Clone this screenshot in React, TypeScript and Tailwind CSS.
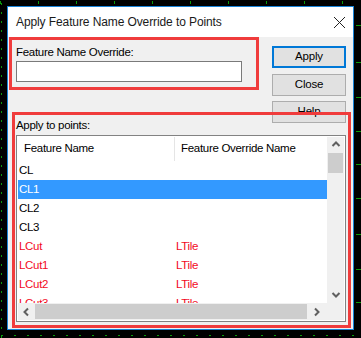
import React from "react";

const font = { fontFamily: '"Segoe UI", "Liberation Sans", Arial, sans-serif' };

function Background() {
  const topTicks = [];
  for (let x = 0; x < 361; x += 38) topTicks.push(x);
  const rightTicks = [25, 62, 97, 131, 164, 198, 234, 269, 302];
  const leftDots = [];
  for (let y = 3; y < 338; y += 9) leftDots.push(y);
  const bottomDots = [];
  for (let x = 1; x < 361; x += 13) bottomDots.push(x);
  return (
    <svg className="absolute inset-0" width={361} height={338}>
      {topTicks.map((x) => (
        <rect key={"t" + x} x={x} y={1} width={1} height={3} fill="#0a9a0a" />
      ))}
      {leftDots.map((y) => (
        <rect key={"l" + y} x={1} y={y} width={1} height={2} fill="#0a9a0a" />
      ))}
      {bottomDots.map((x) => (
        <rect key={"b" + x} x={x} y={335} width={2} height={1} fill="#0a9a0a" />
      ))}
      {rightTicks.map((y) => (
        <rect key={"r" + y} x={356} y={y} width={5} height={1} fill="#0a9a0a" />
      ))}
    </svg>
  );
}

function Chevron({ dir }: { dir: "up" | "down" | "left" | "right" }) {
  const paths: Record<string, string> = {
    up: "M1.5 6 L5 2.5 L8.5 6",
    down: "M1.5 3 L5 6.5 L8.5 3",
    left: "M6 1.5 L2.5 5 L6 8.5",
    right: "M3 1.5 L6.5 5 L3 8.5",
  };
  return (
    <svg width={10} height={10} viewBox="0 0 10 10">
      <path d={paths[dir]} fill="none" stroke="#606060" strokeWidth={2} />
    </svg>
  );
}

const rows: { a: string; b: string; red?: boolean; sel?: boolean }[] = [
  { a: "CL", b: "" },
  { a: "CL1", b: "", sel: true },
  { a: "CL2", b: "" },
  { a: "CL3", b: "" },
  { a: "LCut", b: "LTile", red: true },
  { a: "LCut1", b: "LTile", red: true },
  { a: "LCut2", b: "LTile", red: true },
  { a: "LCut3", b: "LTile", red: true },
];

function Button({ label, primary }: { label: string; primary?: boolean }) {
  return (
    <div
      className={
        "w-[74px] h-[22px] flex items-center justify-center bg-[#e1e1e1] text-[11.5px] tracking-[-0.2px] text-black " +
        (primary ? "border-2 border-[#0078d7]" : "border border-[#adadad]")
      }
    >
      {label}
    </div>
  );
}

export default function App() {
  return (
    <div className="relative w-[361px] h-[338px] bg-black overflow-hidden" style={font}>
      <Background />
      <div className="relative pt-[6px] pl-[7px]">
        <div className="relative w-[347px] h-[324px] border border-[#1883d7] bg-[#f0f0f0] flex flex-col">
          {/* Title bar */}
          <div className="h-[30px] bg-white flex items-center justify-between pl-[8px] pr-[7px]">
            <span className="text-[12px] tracking-[-0.1px] text-[#1a1a1a] leading-none">
              Apply Feature Name Override to Points
            </span>
            <svg width={13} height={13} viewBox="0 0 13 13">
              <path d="M1 1 L12 12 M12 1 L1 12" stroke="#222" strokeWidth={1} />
            </svg>
          </div>
          {/* Body */}
          <div className="flex-1 flex flex-col pl-[8px] pr-[6px] text-[11.5px] tracking-[-0.3px]">
            <div className="flex justify-between pr-[1px]">
              <div className="flex flex-col pt-[8px]">
                <div className="leading-[15px] text-black">Feature Name Override:</div>
                <div className="mt-[1px] w-[226px] h-[21px] bg-white border border-[#7a7a7a]" />
                <div className="mt-[36px] leading-[15px] text-black">Apply to points:</div>
              </div>
              <div className="flex flex-col pt-[9px]">
                <Button label="Apply" primary />
                <div className="mt-[6px]">
                  <Button label="Close" />
                </div>
                <div className="mt-[5px]">
                  <Button label="Help" />
                </div>
              </div>
            </div>
            {/* List box */}
            <div className="mt-[2px] w-[330px] h-[187px] border border-[#828282] bg-white p-[1px] flex flex-col">
              <div className="flex flex-1 min-h-0">
                <div className="w-[309px] flex flex-col overflow-hidden">
                  <div className="h-[24px] shrink-0 flex items-center text-black">
                    <div className="w-[156px] pl-[6px]">Feature Name</div>
                    <div className="w-[1px] h-[24px] bg-[#e5e5e5]" />
                    <div className="pl-[6px]">Feature Override Name</div>
                  </div>
                  <div className="flex flex-col overflow-hidden">
                    {rows.map((r) => (
                      <div
                        key={r.a}
                        className={
                          "h-[19px] shrink-0 flex items-center " +
                          (r.sel ? "bg-[#3399ff] text-white " : "") +
                          (r.red ? "text-[#f20a1e]" : r.sel ? "" : "text-black")
                        }
                      >
                        <div className="w-[158px] pl-[1px]">{r.a}</div>
                        <div>{r.b}</div>
                      </div>
                    ))}
                  </div>
                </div>
                <div className="w-[17px] bg-[#f0f0f0] flex flex-col items-center">
                  <div className="h-[16px] flex items-center justify-center">
                    <Chevron dir="up" />
                  </div>
                  <div className="w-[15px] h-[20px] bg-[#cdcdcd]" />
                  <div className="flex-1" />
                  <div className="h-[17px] flex items-center justify-center">
                    <Chevron dir="down" />
                  </div>
                </div>
              </div>
              <div className="h-[17px] shrink-0 flex">
                <div className="w-[309px] bg-[#f0f0f0] flex items-center">
                  <div className="w-[17px] flex items-center justify-center">
                    <Chevron dir="left" />
                  </div>
                  <div className="w-[272px] h-[15px] bg-[#cdcdcd]" />
                  <div className="flex-1 flex items-center justify-center">
                    <Chevron dir="right" />
                  </div>
                </div>
                <div className="w-[17px] bg-[#f0f0f0]" />
              </div>
            </div>
          </div>
          {/* Red annotation boxes */}
          <div className="absolute left-[1px] top-[30px] w-[250px] h-[53px] border-[3px] border-[#f03c3c] pointer-events-none" />
          <div className="absolute left-[4px] top-[105px] w-[339px] h-[216px] border-[3px] border-[#f03c3c] pointer-events-none" />
        </div>
      </div>
    </div>
  );
}
